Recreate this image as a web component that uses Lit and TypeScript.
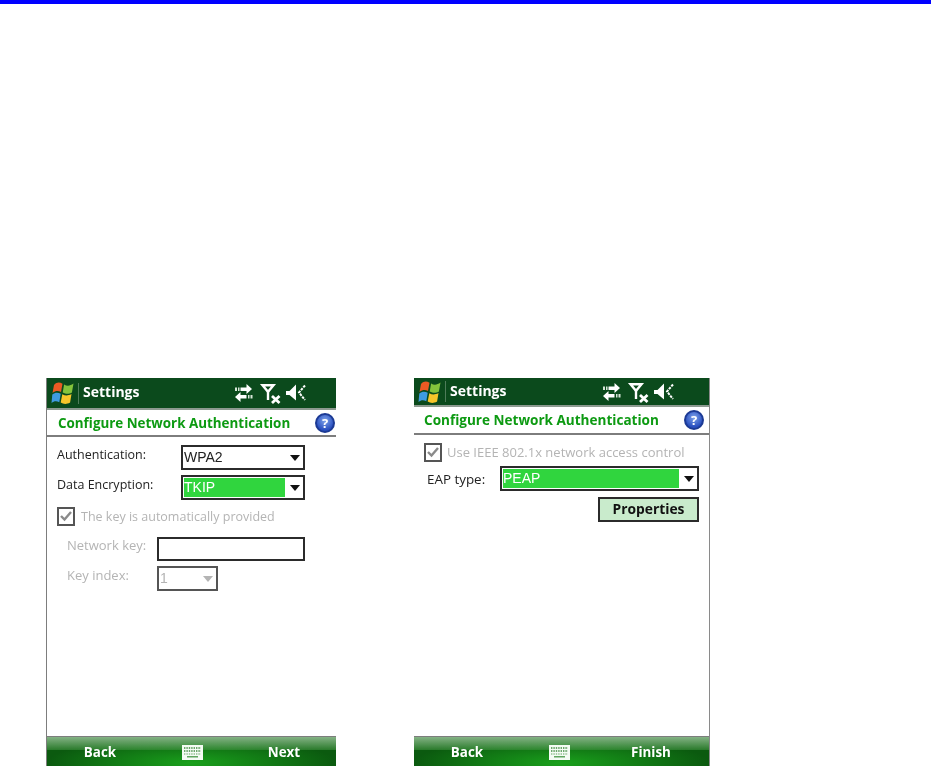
import { LitElement, html, css, svg } from "lit";
import { customElement, property } from "lit/decorators.js";

const flag = html`<svg class="flag" viewBox="0 0 22 24" width="23" height="24">
  <path d="M2.5 4 C5.5 0.8 8 1 11 2.8 L9.5 11 C6.5 9.6 4 9.8 1 12 Z" fill="#ea5a24" />
  <path d="M12.6 3.4 C15.5 5.4 18.5 5 22 2.6 L20.4 11.4 C17 13.4 14.5 13.2 11.2 11.4 Z" fill="#84c43c" />
  <path d="M0.8 13.5 C3.5 11.4 6.5 11.4 9.2 12.8 L7.8 21.2 C5 19.6 2.5 19.8 0 22 Z" fill="#3f9be0" />
  <path d="M10.8 13.2 C14 15 16.5 14.8 20 13 L18.6 21.6 C15 23.6 12 23.4 9.2 21.6 Z" fill="#f8c62a" />
</svg>`;

const arrows = svg`
  <path d="M7 4.5h6V1l5.5 5-5.5 5V8H7z" fill="#fff" />
  <path d="M1.500 4.500h2V8h-2zM4.500 4.500h1.500V8H4.500z" fill="#d8e6d8" />
  <path d="M13 12H7V9L1.500 14 7 19v-3.500h6z" fill="#fff" />
  <path d="M14.500 12h1.500v3.500h-1.500zM17 12h2v3.500h-2z" fill="#d8e6d8" />
`;

const signal = svg`
  <path d="M1.500 2.200h11L7 8.800z" fill="none" stroke="#fff" stroke-width="2.400" />
  <path d="M7 8v9" stroke="#fff" stroke-width="2.400" />
  <path d="M11 13l7.500 7M18.500 13L11 20" stroke="#fff" stroke-width="2.800" />
`;

const speaker = svg`
  <path d="M0 8h3.500L10 1.500v16L3.500 12H0z" fill="#fff" />
  <path d="M19 2.500l-6 7 6 7.500" fill="none" stroke="#fff" stroke-width="2" stroke-dasharray="2.600 1" />
`;

const keyboard = html`<svg class="kbd" viewBox="0 0 21 15" width="21" height="15">
  <rect width="21" height="15" fill="#f4fbf4" />
  <path d="M2 3h17M2 6h17" stroke="#3f8a3f" stroke-width="1.300" stroke-dasharray="1.400 1" />
  <path d="M2 9h17" stroke="#5fa65f" stroke-width="1.100" stroke-dasharray="1.400 1" />
  <rect x="5" y="11" width="11" height="1.500" fill="#5fa65f" />
</svg>`;

const check = html`<svg viewBox="0 0 14 14" width="14" height="14">
  <path d="M2 7l3.500 3.500L12 3" fill="none" stroke="#8a8a8a" stroke-width="2.400" />
</svg>`;

@customElement("wm-phone")
class WmPhone extends LitElement {
  @property() action = "";

  static styles = css`
    :host {
      display: flex;
      flex-direction: column;
      height: 388px;
      box-sizing: border-box;
      background: #fff;
      font-family: "Open Sans", "DejaVu Sans", sans-serif;
      overflow: hidden;
    }
    .status {
      height: var(--status-h, 32px);
      flex: none;
      background: #0b4a1c;
      display: flex;
      align-items: center;
      padding-left: 4px;
      box-sizing: border-box;
      border-bottom: 2px solid #8d9a90;
      color: #fff;
    }
    .flag {
      flex: none;
    }
    .divider {
      width: 1px;
      height: 21px;
      background: #4f7c5a;
      margin: 0 4px;
    }
    .app {
      font-size: 14px;
      font-weight: 700;
      flex: 1;
      padding-bottom: 3px;
    }
    .tray {
      display: flex;
      align-items: center;
      gap: 5px;
      margin-right: var(--tray-end, 30px);
    }
    .tray svg {
      overflow: visible;
    }
    .title {
      height: var(--title-h, 27px);
      flex: none;
      box-sizing: border-box;
      border-bottom: 2px solid #7d7d7d;
      display: flex;
      align-items: center;
      justify-content: space-between;
      padding: 0 var(--help-end, 1px) 0 var(--title-start, 11px);
      color: #0d9a12;
      font-size: var(--title-size, 13.400px);
      font-weight: 700;
    }
    .help {
      width: 20px;
      height: 20px;
      border-radius: 50%;
      box-sizing: border-box;
      border: 2px solid #1c3a94;
      background: radial-gradient(circle at 50% 35%, #7fa4ea, #2a50c0 70%);
      color: #fff;
      font-size: 13px;
      line-height: 16px;
      text-align: center;
    }
    .body {
      flex: 1;
      min-height: 0;
    }
    .bar {
      height: 30px;
      flex: none;
      border-top: 1px solid #7d7d7d;
      box-sizing: border-box;
      display: grid;
      grid-template-columns: repeat(3, 92px);
      align-items: center;
      justify-items: center;
      padding: 1px 0 0 var(--bar-start, 7px);
      color: #fff;
      font-size: 13.400px;
      font-weight: 700;
      background:
        linear-gradient(#a2c8a2cc, #3d8f3d99 45%, #0000 46%),
        radial-gradient(ellipse 50% 90% at 50% 90%, #1aa01c, #0b5a0f);
    }
  `;

  render() {
    return html`
      <div class="status">
        ${flag}
        <div class="divider"></div>
        <div class="app">Settings</div>
        <div class="tray">
          <svg viewBox="2.500 0 20 20" width="20" height="20">${arrows}</svg>
          <svg viewBox="0 0 20 20" width="20" height="20">${signal}</svg>
          <svg viewBox="0 0 20 20" width="20" height="20">${speaker}</svg>
        </div>
      </div>
      <div class="title">
        <span>Configure Network Authentication</span>
        <span class="help">?</span>
      </div>
      <div class="body"><slot></slot></div>
      <div class="bar">
        <span>Back</span>
        ${keyboard}
        <span>${this.action}</span>
      </div>
    `;
  }
}

@customElement("app-root")
class AppRoot extends LitElement {
  static styles = css`
    :host {
      display: block;
      height: 766px;
      overflow: hidden;
      background: #fff;
      font-family: "Open Sans", "DejaVu Sans", sans-serif;
    }
    .rule {
      height: 4px;
      background: #0000ff;
    }
    .phones {
      display: flex;
      gap: 78px;
      margin-top: 374px;
      padding-left: 46px;
      filter: blur(0.35px);
    }
    .left {
      width: 290px;
      border-left: 1px solid #7d7d7d;
    }
    .right {
      width: 296px;
      border-right: 1px solid #8a8a8a;
      --status-h: 29px;
      --title-h: 28px;
      --title-start: 10px;
      --title-size: 13.550px;
      --tray-end: 35px;
      --help-end: 5px;
      --bar-start: 7px;
    }
    .form {
      padding: 8px 31px 0 10px;
      display: flex;
      flex-direction: column;
      font-size: 12.500px;
      color: #222;
    }
    .row {
      display: flex;
      align-items: center;
      justify-content: space-between;
      height: 25px;
    }
    .row + .row {
      margin-top: 5px;
    }
    .row > span {
      padding-bottom: 7px;
    }
    .indent {
      padding-left: 10px;
      justify-content: flex-start;
      font-size: 13px;
    }
    .indent > span {
      width: 90px;
    }
    .off {
      color: #b4b4b4;
    }
    .field {
      box-sizing: border-box;
      height: 25px;
      border: 2px solid #2b2b2b;
      display: flex;
      align-items: center;
      padding: 1px;
      font-family: "Liberation Sans", Arial, sans-serif;
      font-size: 14px;
    }
    .wide {
      width: 124px;
    }
    .entry {
      width: 148px;
      height: 24px;
    }
    .small {
      width: 61px;
      border-color: #555;
    }
    .value {
      flex: 1;
      height: 100%;
      line-height: 19px;
    }
    .picked {
      background: #30d53e;
      color: #fff;
    }
    .arrow {
      flex: none;
      width: 0;
      height: 0;
      margin: 0 2px 0 5px;
      border: 5.500px solid transparent;
      border-top: 6px solid #111;
      border-bottom: 0;
    }
    .small .arrow {
      border-top-color: #b4b4b4;
    }
    .check {
      display: flex;
      align-items: center;
      gap: 6px;
      height: 20px;
      margin: 6px 0 10px;
    }
    .box {
      box-sizing: border-box;
      width: 18px;
      height: 19px;
      border: 2px solid #555;
      display: flex;
      align-items: center;
      justify-content: center;
    }
    .eap {
      padding: 7px 10px 0 10px;
      display: flex;
      flex-direction: column;
      font-size: 13px;
      color: #222;
    }
    .eap .check {
      margin: 0 0 4px;
      gap: 5px;
    }
    .eap .indent {
      padding-left: 3px;
      font-size: 13.400px;
    }
    .eap .indent > span {
      width: 73px;
      padding-bottom: 0;
    }
    .eap .grow {
      width: 199px;
    }
    .actions {
      display: flex;
      justify-content: flex-end;
      margin-top: 6px;
    }
    .button {
      box-sizing: border-box;
      width: 101px;
      height: 25px;
      border: 2px solid #2b2b2b;
      background: #c9ebcc;
      color: #111;
      font-size: 13.800px;
      font-weight: 700;
      text-align: center;
      line-height: 19px;
    }
  `;

  render() {
    return html`
      <div class="rule"></div>
      <div class="phones">
        <wm-phone class="left" action="Next">
          <div class="form">
            <div class="row">
              <span>Authentication:</span>
              <div class="field wide">
                <span class="value">WPA2</span><i class="arrow"></i>
              </div>
            </div>
            <div class="row">
              <span>Data Encryption:</span>
              <div class="field wide">
                <span class="value picked">TKIP</span><i class="arrow"></i>
              </div>
            </div>
            <div class="check off">
              <div class="box">${check}</div>
              <span>The key is automatically provided</span>
            </div>
            <div class="row indent off">
              <span>Network key:</span>
              <div class="field entry"></div>
            </div>
            <div class="row indent off">
              <span>Key index:</span>
              <div class="field small">
                <span class="value">1</span><i class="arrow"></i>
              </div>
            </div>
          </div>
        </wm-phone>
        <wm-phone class="right" action="Finish">
          <div class="eap">
            <div class="check off">
              <div class="box">${check}</div>
              <span>Use IEEE 802.1x network access control</span>
            </div>
            <div class="row indent">
              <span>EAP type:</span>
              <div class="field grow">
                <span class="value picked">PEAP</span><i class="arrow"></i>
              </div>
            </div>
            <div class="actions"><div class="button">Properties</div></div>
          </div>
        </wm-phone>
      </div>
    `;
  }
}
